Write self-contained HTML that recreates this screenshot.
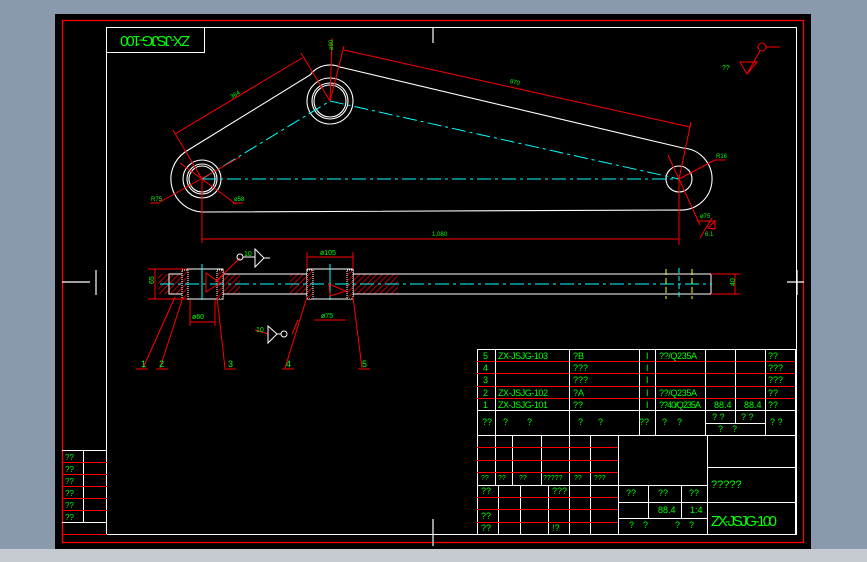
<!DOCTYPE html>
<html><head><meta charset="utf-8"><style>
html,body{margin:0;padding:0;width:867px;height:562px;overflow:hidden;background:#8a99ab}
svg{display:block}
text{font-family:"Liberation Sans Narrow","Liberation Sans",sans-serif;fill:#00ff00}
</style></head><body>
<svg width="867" height="562" viewBox="0 0 867 562" xmlns="http://www.w3.org/2000/svg">
<defs>
<pattern id="h" width="4" height="4" patternUnits="userSpaceOnUse" patternTransform="rotate(45)">
<rect width="4" height="4" fill="#000"/><line x1="0" y1="0" x2="0" y2="4" stroke="#ff0000" stroke-width="1.4"/>
</pattern>
</defs>
<rect x="0" y="549" width="867" height="13" fill="#c6cad1"/>
<rect x="55" y="14" width="756" height="535" fill="#000"/>
<rect x="62.5" y="20.5" width="741" height="522" fill="none" stroke="#ff0000" stroke-width="1.3"/>
<rect x="106.5" y="27.5" width="690" height="507" fill="none" stroke="#fff" stroke-width="1"/>
<rect x="106.5" y="27.5" width="98" height="25" fill="none" stroke="#fff"/>
<text x="155" y="40" font-size="15" text-anchor="middle" textLength="70" transform="rotate(180 155 40)" dominant-baseline="middle">ZX-JSJG-100</text>
<g stroke="#fff" stroke-width="1.2">
<line x1="433" y1="27" x2="433" y2="43"/><line x1="433" y1="519" x2="433" y2="546"/>
<line x1="62" y1="282" x2="90" y2="282"/><line x1="787" y1="282" x2="804" y2="282"/>
<line x1="96" y1="270" x2="96" y2="295"/><line x1="797" y1="270" x2="797" y2="295"/>
</g>
<g fill="none" stroke="#fff" stroke-width="1.1">
<path d="M185,152 L310,75 A25,25 0 0 1 340,67 L683,148 A30,30 0 0 1 679,210 L202,212 A33,33 0 0 1 185,152"/>
<circle cx="202" cy="179" r="19"/><circle cx="202" cy="179" r="15"/><circle cx="202" cy="179" r="13"/>
<circle cx="330" cy="101" r="23"/><circle cx="330" cy="101" r="18"/><circle cx="330" cy="101" r="16"/>
<circle cx="679" cy="179" r="13"/>
</g>
<g stroke="#00ffff" stroke-width="1" stroke-dasharray="14,4,3,4" fill="none">
<line x1="202" y1="179" x2="679" y2="179"/>
<line x1="202" y1="179" x2="330" y2="101"/>
<line x1="330" y1="101" x2="679" y2="179"/>
</g>
<g stroke="#ff0000" stroke-width="1" fill="none">
<line x1="175" y1="134" x2="302" y2="58"/>
<line x1="173" y1="130" x2="202" y2="179"/><line x1="301" y1="53" x2="330" y2="101"/>
<line x1="344" y1="50" x2="690" y2="127"/>
<line x1="344" y1="46" x2="330" y2="101"/><line x1="691" y1="122" x2="679" y2="179"/>
<line x1="332" y1="38" x2="330" y2="101"/>
<line x1="202" y1="179" x2="202" y2="243"/><line x1="679" y1="179" x2="679" y2="245"/>
<line x1="202" y1="239" x2="679" y2="239"/>
<line x1="160" y1="202" x2="240" y2="157"/><line x1="180" y1="163" x2="236" y2="204"/>
<line x1="150" y1="203" x2="160" y2="203"/><line x1="233" y1="203" x2="243" y2="203"/>
<line x1="668" y1="155" x2="700" y2="225"/><line x1="679" y1="179" x2="715" y2="160"/><line x1="715" y1="160" x2="725" y2="160"/>
<line x1="697" y1="221" x2="715" y2="221"/><line x1="700" y1="238" x2="712" y2="218"/>
<path d="M708,228 L715,221 L715,229 Z"/>
<circle cx="762" cy="47" r="4"/><line x1="766" y1="47" x2="780" y2="47"/><line x1="760" y1="51" x2="747" y2="74"/>
<path d="M740,62 L757,62 L747,74 Z"/>
</g>
<g font-size="6">
<text x="230" y="96" transform="rotate(-31 236 94)">364</text>
<text x="510" y="84" transform="rotate(13 515 82)">870</text>
<text x="432" y="236">1,080</text>
<text x="151" y="201">R75</text><text x="234" y="201">ø58</text>
<text x="716" y="158">R16</text><text x="700" y="218">ø75</text><text x="705" y="236">6.1</text>
<text x="328" y="55" transform="rotate(-90 328 50)">ø80</text>
<text x="722" y="70" font-size="7">??</text>
</g>
<g stroke-width="1" fill="none">
<rect x="158" y="274" width="40" height="20" fill="url(#h)" stroke="none"/>
<rect x="212" y="274" width="28" height="20" fill="url(#h)" stroke="none"/>
<rect x="290" y="274" width="30" height="20" fill="url(#h)" stroke="none"/>
<rect x="352" y="274" width="46" height="20" fill="url(#h)" stroke="none"/>
<rect x="169" y="274" width="542" height="20" stroke="#fff"/>
<rect x="187" y="269" width="36" height="30" stroke="#fff" fill="#000"/>
<rect x="307" y="269" width="46" height="30" stroke="#fff" fill="#000"/>
<rect x="182" y="270" width="6" height="29" fill="url(#h)" stroke="#fff" stroke-dasharray="1,1"/>
<rect x="217" y="270" width="6" height="29" fill="url(#h)" stroke="#fff" stroke-dasharray="1,1"/>
<rect x="307" y="270" width="6" height="29" fill="url(#h)" stroke="#fff" stroke-dasharray="1,1"/>
<rect x="347" y="270" width="6" height="29" fill="url(#h)" stroke="#fff" stroke-dasharray="1,1"/>
<line x1="160" y1="284" x2="712" y2="284" stroke="#00ffff" stroke-dasharray="14,4,3,4"/>
<line x1="202" y1="264" x2="202" y2="300" stroke="#00ffff"/><line x1="330" y1="264" x2="330" y2="300" stroke="#00ffff"/>
<line x1="679" y1="268" x2="679" y2="300" stroke="#00ffff" stroke-dasharray="5,3"/>
<line x1="666" y1="269" x2="666" y2="299" stroke="#ffff00" stroke-dasharray="6,3"/>
<line x1="692" y1="269" x2="692" y2="299" stroke="#ffff00" stroke-dasharray="6,3"/>
<g stroke="#ff0000">
<line x1="148" y1="269" x2="187" y2="269"/><line x1="148" y1="299" x2="187" y2="299"/><line x1="155" y1="269" x2="155" y2="299"/>
<line x1="711" y1="274" x2="740" y2="274"/><line x1="711" y1="294" x2="740" y2="294"/><line x1="735" y1="274" x2="735" y2="294"/>
<line x1="307" y1="257" x2="353" y2="257"/><line x1="307" y1="252" x2="307" y2="269"/><line x1="353" y1="252" x2="353" y2="269"/>
<line x1="190" y1="322" x2="215" y2="322"/><line x1="190" y1="300" x2="190" y2="326"/><line x1="215" y1="300" x2="215" y2="326"/>
<line x1="314" y1="320" x2="346" y2="320"/>
<line x1="143" y1="368" x2="175" y2="297"/><line x1="160" y1="368" x2="183" y2="297"/><line x1="225" y1="368" x2="217" y2="297"/>
<line x1="285" y1="368" x2="307" y2="297"/><line x1="362" y1="368" x2="353" y2="297"/>
<line x1="136" y1="369" x2="148" y2="369"/><line x1="156" y1="369" x2="168" y2="369"/><line x1="224" y1="369" x2="236" y2="369"/>
<line x1="282" y1="369" x2="294" y2="369"/><line x1="358" y1="369" x2="370" y2="369"/>
<line x1="215" y1="282" x2="240" y2="258"/><line x1="292" y1="334" x2="298" y2="320"/>
<line x1="255" y1="330" x2="268" y2="334"/>
<path d="M206,273 L220,283 L206,292 Z" /><path d="M329,284 L346,291 L330,296 Z"/>
</g>
<g stroke="#fff">
<circle cx="240" cy="257" r="3"/><path d="M255,249 L264,258 L255,267 Z"/><line x1="264" y1="258" x2="270" y2="258"/><line x1="243" y1="257" x2="255" y2="257"/>
<path d="M268,326 L277,334 L268,343 Z"/><circle cx="284" cy="334" r="3"/><line x1="277" y1="334" x2="281" y2="334"/>
</g>
</g>
<g font-size="7">
<text x="150" y="288" transform="rotate(-90 150 284)">65</text>
<text x="729" y="288" transform="rotate(-90 731 284)">40</text>
<text x="320" y="255">ø105</text><text x="192" y="319">ø60</text><text x="321" y="318">ø75</text>
<text x="244" y="256">10</text><text x="256" y="332">10</text>
<text x="141" y="367" font-size="9">1</text><text x="159" y="367" font-size="9">2</text><text x="228" y="367" font-size="9">3</text>
<text x="286" y="367" font-size="9">4</text><text x="362" y="367" font-size="9">5</text>
</g>
<g stroke-width="1" fill="none">
<line x1="62" y1="450.5" x2="107" y2="450.5" stroke="#fff"/>
<line x1="62" y1="522.5" x2="107" y2="522.5" stroke="#fff"/>
<line x1="83.5" y1="450" x2="83.5" y2="522" stroke="#fff"/>
<g stroke="#ff0000"><line x1="62" y1="462.5" x2="107" y2="462.5"/><line x1="62" y1="474.5" x2="107" y2="474.5"/><line x1="62" y1="486.5" x2="107" y2="486.5"/><line x1="62" y1="498.5" x2="107" y2="498.5"/><line x1="62" y1="510.5" x2="107" y2="510.5"/><line x1="62" y1="534.5" x2="107" y2="534.5"/></g>
</g>
<g font-size="8"><text x="65" y="460">??</text><text x="65" y="472">??</text><text x="65" y="484">??</text><text x="65" y="496">??</text><text x="65" y="508">??</text><text x="65" y="520">??</text></g>
<g stroke-width="1" fill="none">
<rect x="477.5" y="349.5" width="318" height="185" stroke="#fff"/>
<g stroke="#ff0000"><line x1="477" y1="361.5" x2="795" y2="361.5"/><line x1="477" y1="373.5" x2="795" y2="373.5"/><line x1="477" y1="386.5" x2="795" y2="386.5"/><line x1="477" y1="398.5" x2="795" y2="398.5"/></g>
<g stroke="#fff">
<line x1="477" y1="410.5" x2="795" y2="410.5"/><line x1="477" y1="435.5" x2="795" y2="435.5"/>
<line x1="495.5" y1="349" x2="495.5" y2="435"/><line x1="569.5" y1="349" x2="569.5" y2="435"/><line x1="639.5" y1="349" x2="639.5" y2="435"/>
<line x1="655.5" y1="349" x2="655.5" y2="435"/><line x1="705.5" y1="349" x2="705.5" y2="435"/><line x1="735.5" y1="349" x2="735.5" y2="423"/>
<line x1="765.5" y1="349" x2="765.5" y2="435"/><line x1="705" y1="423.5" x2="765" y2="423.5"/>
<line x1="495.5" y1="435" x2="495.5" y2="485"/><line x1="512.5" y1="435" x2="512.5" y2="485"/><line x1="541.5" y1="435" x2="541.5" y2="485"/>
<line x1="569.5" y1="435" x2="569.5" y2="534"/><line x1="590.5" y1="435" x2="590.5" y2="534"/><line x1="618.5" y1="435" x2="618.5" y2="534"/>
<line x1="477" y1="485.5" x2="707" y2="485.5"/>
<line x1="498.5" y1="485" x2="498.5" y2="534"/><line x1="520.5" y1="485" x2="520.5" y2="534"/><line x1="548.5" y1="485" x2="548.5" y2="534"/>
<line x1="707.5" y1="435" x2="707.5" y2="534"/>
<line x1="618" y1="502.5" x2="707" y2="502.5"/><line x1="618" y1="518.5" x2="707" y2="518.5"/>
<line x1="648.5" y1="485" x2="648.5" y2="518"/><line x1="681.5" y1="485" x2="681.5" y2="518"/>
<line x1="707" y1="467.5" x2="795" y2="467.5"/><line x1="707" y1="502.5" x2="795" y2="502.5"/>
</g>
<g stroke="#ff0000"><line x1="477" y1="447.5" x2="618" y2="447.5"/><line x1="477" y1="460.5" x2="618" y2="460.5"/><line x1="477" y1="472.5" x2="618" y2="472.5"/>
<line x1="477" y1="497.5" x2="618" y2="497.5"/><line x1="477" y1="509.5" x2="618" y2="509.5"/><line x1="477" y1="522.5" x2="618" y2="522.5"/></g>
</g>
<g font-size="9">
<text x="483" y="359">5</text><text x="483" y="371">4</text><text x="483" y="383">3</text><text x="483" y="396">2</text><text x="483" y="408">1</text>
<text x="498" y="359" textLength="50">ZX-JSJG-103</text><text x="498" y="396" textLength="50">ZX-JSJG-102</text><text x="498" y="408" textLength="50">ZX-JSJG-101</text>
<text x="573" y="359">?B</text><text x="573" y="371">???</text><text x="573" y="383">???</text><text x="573" y="396">?A</text><text x="573" y="408">??</text>
<text x="646" y="359">I</text><text x="646" y="371">I</text><text x="646" y="383">I</text><text x="646" y="396">I</text><text x="646" y="408">I</text>
<text x="659" y="359" textLength="38">??/Q235A</text><text x="659" y="396" textLength="38">??/Q235A</text><text x="659" y="408" textLength="42">??40/Q235A</text>
<text x="714" y="408">88.4</text><text x="744" y="408">88.4</text>
<text x="768" y="359">??</text><text x="768" y="371">???</text><text x="768" y="383">???</text><text x="768" y="396">??</text><text x="768" y="408">??</text>
<text x="482" y="425">??</text><text x="503" y="425">?</text><text x="527" y="425">?</text><text x="578" y="425">?</text><text x="598" y="425">?</text>
<text x="639" y="425">??</text><text x="662" y="425">?</text><text x="677" y="425">?</text>
<text x="712" y="420">? ?</text><text x="741" y="420">? ?</text><text x="718" y="432">?</text><text x="732" y="432">?</text><text x="770" y="425">? ?</text>
<text x="481" y="480" font-size="7">??</text><text x="498" y="480" font-size="7">??</text><text x="519" y="480" font-size="7">??</text><text x="543" y="480" font-size="7">?????</text><text x="574" y="480" font-size="7">??</text><text x="594" y="480" font-size="7">???</text>
<text x="481" y="494">??</text><text x="552" y="494">???</text><text x="481" y="519">??</text><text x="481" y="531">??</text><text x="552" y="531">!?</text>
<text x="626" y="496">??</text><text x="658" y="496">??</text><text x="689" y="496">??</text>
<text x="658" y="513">88.4</text><text x="690" y="513">1:4</text>
<text x="629" y="528">?</text><text x="643" y="528">?</text><text x="675" y="528">?</text><text x="689" y="528">?</text>
<text x="711" y="488" font-size="11">?????</text>
<text x="711" y="526" font-size="15" textLength="66">ZX-JSJG-100</text>
</g>
</svg>
</body></html>
